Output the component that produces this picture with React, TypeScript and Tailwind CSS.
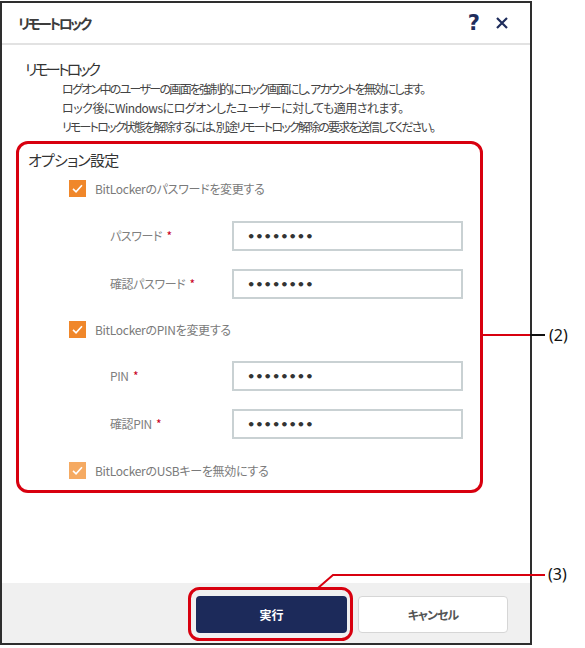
import React from 'react'

const jp = "font-['Noto_Sans_CJK_JP','Noto_Sans',sans-serif] [font-feature-settings:'palt']"

function Check({ faded }: { faded?: boolean }) {
  return (
    <span
      className={`flex h-[17px] w-[17px] shrink-0 items-center justify-center ${faded ? 'bg-[#f5aa62]' : 'bg-[#f0872a]'}`}
    >
      <svg viewBox="0 0 16 16" className="h-[13px] w-[13px]" fill="none" stroke="white" strokeWidth="2">
        <path d="M2.5 8.5 L6.2 12 L13.5 4" />
      </svg>
    </span>
  )
}

function CheckRow({ label, faded, className }: { label: string; faded?: boolean; className?: string }) {
  return (
    <div className={`ml-[50px] flex items-center gap-[9px] ${className ?? ''}`}>
      <Check faded={faded} />
      <span className="text-[12px] leading-none tracking-[-0.3px] text-[#7a7a7a]">{label}</span>
    </div>
  )
}

function Field({ label, className }: { label: string; className?: string }) {
  return (
    <div className={`ml-[91px] flex items-center ${className ?? ''}`}>
      <span className="w-[122px] text-[12px] tracking-[-0.4px] text-[#808080]">
        {label} <span className="ml-[2px] text-[#c8001e]">*</span>
      </span>
      <div className="flex h-[30px] w-[231px] items-center border-2 border-[#c9d1d3] pl-[13px]">
        <span className="font-['DejaVu_Sans',sans-serif] text-[13px] font-bold leading-none text-[#333]">••••••••</span>
      </div>
    </div>
  )
}

export default function App() {
  return (
    <div className={`relative h-[648px] w-[585px] overflow-hidden bg-white ${jp}`}>
      <div className="mt-px flex h-[644px] w-[532px] flex-col border-2 border-[#2e2e2e] bg-white">
        {/* header */}
        <div className="flex h-[42px] items-center justify-between border-b-2 border-[#e2e2e2] pl-4 pr-[22px]">
          <span className="text-[14px] font-bold tracking-[-2.5px] text-[#3c3c3c]">リモートロック</span>
          <div className="flex items-center gap-[16px]">
            <span className="font-['DejaVu_Sans',sans-serif] text-[21px] font-bold leading-none text-[#1f2d5c]">?</span>
            <svg viewBox="0 0 12 12" className="h-[12px] w-[12px]" stroke="#1f2d5c" strokeWidth="2.2">
              <path d="M1 1 L11 11 M11 1 L1 11" />
            </svg>
          </div>
        </div>

        {/* body */}
        <div className="flex-1">
          <div className="ml-[23px] mt-[14px] text-[15px] leading-[20px] tracking-[-2.8px] text-[#333]">リモートロック</div>
          <div className="ml-[60px] text-[12px] leading-[19px] text-[#444]">
            <p className="tracking-[-1.7px]">ログオン中のユーザーの画面を強制的にロック画面にし、アカウントを無効にします。</p>
            <p className="tracking-[-0.5px]">ロック後にWindowsにログオンしたユーザーに対しても適用されます。</p>
            <p className="tracking-[-1.8px]">リモートロック状態を解除するには、別途リモートロック解除の要求を送信してください。</p>
          </div>

          <div className="ml-[14px] mt-[5px] w-[467px] rounded-[12px] border-[3px] border-[#d8000f] pb-[11px] pt-[6px]">
            <div className="ml-[9px] text-[15px] leading-[20px] tracking-[-0.8px] text-[#333]">オプション設定</div>
            <CheckRow className="mt-[10px]" label="BitLockerのパスワードを変更する" />
            <Field className="mt-[24px]" label="パスワード" />
            <Field className="mt-[18px]" label="確認パスワード" />
            <CheckRow className="mt-[22px]" label="BitLockerのPINを変更する" />
            <Field className="mt-[23px]" label="PIN" />
            <Field className="mt-[18px]" label="確認PIN" />
            <CheckRow className="mt-[23px]" label="BitLockerのUSBキーを無効にする" faded />
          </div>
        </div>

        {/* footer */}
        <div className="flex h-[60px] justify-end gap-[11px] bg-[#f0f0f0] pr-[22px] pt-[13px]">
          <button className="h-[37px] w-[151px] rounded-[4px] bg-[#1c2a5a] text-[12px] font-bold text-white">
            実行
          </button>
          <button className="h-[37px] w-[150px] rounded-[4px] border border-[#d6d6d6] bg-white text-[12px] font-bold tracking-[-1px] text-[#555]">
            キャンセル
          </button>
        </div>
      </div>

      {/* callouts */}
      <svg className="pointer-events-none absolute left-0 top-0" width="585" height="648" fill="none">
        <rect x="189.5" y="588.5" width="162" height="51" rx="10" stroke="#d8000f" strokeWidth="3" />
        <path d="M318 588 L333 575 L545 575" stroke="#d8000f" strokeWidth="2" />
        <path d="M483 335 L530 335" stroke="#d8000f" strokeWidth="2" />
        <path d="M530 335 L545 335" stroke="#111" strokeWidth="2" />
      </svg>
      <span className="absolute left-[549px] top-[324px] font-['Noto_Sans',sans-serif] text-[16px] leading-[22px] text-[#111]">(2)</span>
      <span className="absolute left-[548px] top-[563px] font-['Noto_Sans',sans-serif] text-[16px] leading-[22px] text-[#111]">(3)</span>
    </div>
  )
}
